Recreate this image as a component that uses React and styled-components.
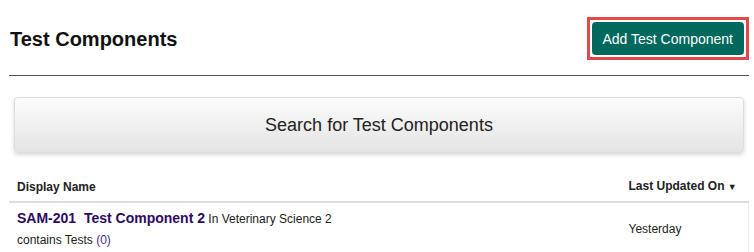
import React from 'react';
import styled, { createGlobalStyle } from 'styled-components';

const GlobalStyle = createGlobalStyle`
  body {
    margin: 0;
    background: #fff;
    font-family: Arial, "Liberation Sans", sans-serif;
    color: #222;
  }
`;

const rows = [
  {
    code: 'SAM-201',
    name: 'Test Component 2',
    area: 'Veterinary Science 2',
    tests: 0,
    updated: 'Yesterday',
  },
];

const App = () => (
  <Page>
    <GlobalStyle />
    <Header>
      <Title>Test Components</Title>
      <FocusRing>
        <AddButton type="button">Add Test Component</AddButton>
      </FocusRing>
    </Header>
    <Rule />
    <SearchBar type="button">Search for Test Components</SearchBar>
    <Table>
      <thead>
        <tr>
          <Th>Display Name</Th>
          <Th $date>
            Last Updated On <Caret>▼</Caret>
          </Th>
        </tr>
      </thead>
      <tbody>
        {rows.map((row) => (
          <tr key={row.code}>
            <Td>
              <NameLine>
                <ItemLink href="#">
                  {row.code}&nbsp; {row.name}
                </ItemLink>{' '}
                In {row.area}
              </NameLine>
              <SubLine>
                contains Tests <Count>({row.tests})</Count>
              </SubLine>
            </Td>
            <Td $date>{row.updated}</Td>
          </tr>
        ))}
      </tbody>
    </Table>
  </Page>
);

export default App;

const Page = styled.div`
  padding: 0 5px 0 9px;
`;

const Header = styled.div`
  display: flex;
  align-items: center;
  justify-content: space-between;
  padding: 17px 0 0 1px;
  height: 43px;
`;

const Title = styled.h1`
  margin: 2px 0 0;
  font-size: 20px;
  font-weight: bold;
  color: #111;
`;

const FocusRing = styled.span`
  display: inline-flex;
  padding: 2px;
  border: 3px solid #e5484a;
`;

const AddButton = styled.button`
  height: 33px;
  padding: 0 11px;
  border: none;
  border-radius: 4px;
  background: #00685d;
  color: #fff;
  font-family: Arial, "Liberation Sans", sans-serif;
  font-size: 14px;
  cursor: pointer;
`;

const Rule = styled.hr`
  margin: 15px 0 0;
  border: none;
  border-top: 1px solid #555;
`;

const SearchBar = styled.button`
  display: block;
  width: calc(100% - 10px);
  height: 56px;
  margin: 21px 0 0 5px;
  border: 1px solid #ddd;
  border-radius: 4px;
  background: linear-gradient(#fcfcfc, #e4e4e4);
  box-shadow: 0 2px 4px rgba(0, 0, 0, 0.15);
  font-family: Arial, "Liberation Sans", sans-serif;
  font-size: 18px;
  color: #222;
  cursor: pointer;
`;

const Table = styled.table`
  width: 100%;
  margin-top: 19px;
  border-collapse: collapse;
`;

const Th = styled.th`
  padding: 7px 8px 7px;
  border-bottom: 2px solid #ddd;
  font-size: 12px;
  line-height: 14px;
  font-weight: bold;
  color: #222;
  text-align: left;
  white-space: nowrap;
  width: ${(p) => (p.$date ? '112px' : 'auto')};
`;

const Caret = styled.span`
  font-size: 9px;
`;

const Td = styled.td`
  padding: 6px 8px 4px;
  font-size: 12px;
  color: #222;
  vertical-align: ${(p) => (p.$date ? 'middle' : 'top')};
  border-right: ${(p) => (p.$date ? '1px solid #eee' : 'none')};
`;

const NameLine = styled.div`
  line-height: 18px;
`;

const ItemLink = styled.a`
  font-size: 14px;
  font-weight: bold;
  color: #2e0a5f;
  text-decoration: none;
`;

const SubLine = styled.div`
  margin-top: 4px;
  line-height: 16px;
`;

const Count = styled.span`
  color: #4a2a8c;
`;
